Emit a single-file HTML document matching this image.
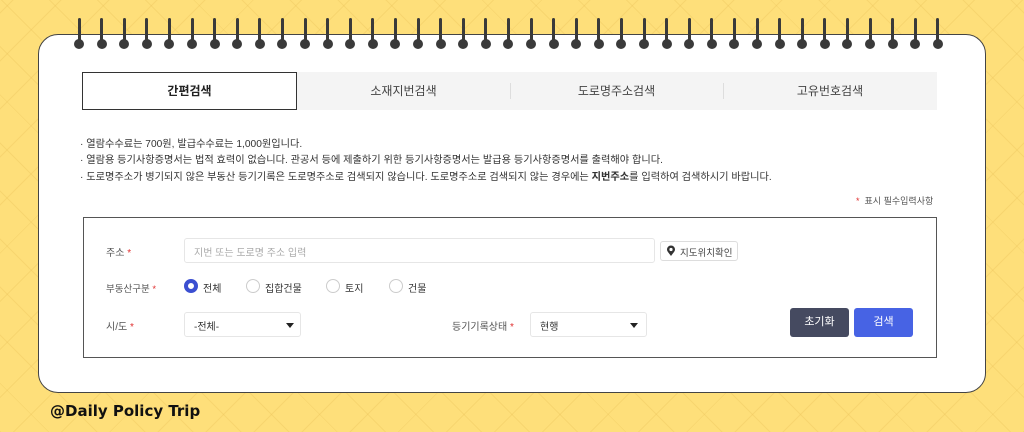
<!DOCTYPE html>
<html><head><meta charset="utf-8"><style>
*{margin:0;padding:0;box-sizing:border-box}
body{width:1024px;height:432px;overflow:hidden;position:relative;font-family:"Liberation Sans","Noto Sans CJK KR",sans-serif;
background-color:#fedf7a;
background-image:repeating-linear-gradient(45deg,rgba(235,195,90,.35) 0 1px,transparent 1px 34px),repeating-linear-gradient(-45deg,rgba(235,195,90,.35) 0 1px,transparent 1px 34px);}
.card{position:absolute;left:38px;top:34px;width:948px;height:359px;background:#fff;border:1.5px solid #444;border-radius:20px;}
.ring{position:absolute;top:18px;width:10px;height:32px}
.ring:before{content:"";position:absolute;left:3.5px;top:0;width:3px;height:26px;background:#3a3a3a;border-radius:2px}
.ring:after{content:"";position:absolute;left:0;top:21px;width:10px;height:10px;border-radius:50%;background:#3a3a3a}
.a{position:absolute;font-size:11px;color:#333;white-space:nowrap}
.tabs{position:absolute;left:82px;top:72px;width:855px;height:38px;background:#f4f4f4}
.tab{position:absolute;top:0;height:38px;line-height:38px;text-align:center;font-size:12px;color:#444}
.sep{position:absolute;top:11px;width:1px;height:16px;background:#ddd}
.box{position:absolute;left:83px;top:217px;width:854px;height:141px;border:1.5px solid #555}
.inp{position:absolute;border:1px solid #e6e6e6;border-radius:3px;background:#fff}
.red{color:#e03030}
.rad{position:absolute;width:14px;height:14px;border:1px solid #ccc;border-radius:50%;background:#fff}
.tri{position:absolute;width:0;height:0;border-left:4px solid transparent;border-right:4px solid transparent;border-top:5px solid #222}
.btn{position:absolute;top:308px;height:29px;border-radius:3px;color:#fff;font-size:11px;text-align:center;line-height:29px}
</style></head><body>
<div class="card"></div>
<div id="rings"></div>
<div class="tabs">
<div class="tab" style="left:0;width:215px;background:#fff;border:1.5px solid #333;font-weight:bold;color:#222;line-height:37px">간편검색</div>
<div class="tab" style="left:215px;width:213px">소재지번검색</div>
<div class="sep" style="left:428px"></div>
<div class="tab" style="left:428px;width:213px">도로명주소검색</div>
<div class="sep" style="left:641px"></div>
<div class="tab" style="left:641px;width:214px">고유번호검색</div>
</div>
<div class="a" style="left:80px;top:135px;font-size:10.2px">· 열람수수료는 700원, 발급수수료는 1,000원입니다.</div>
<div class="a" style="left:80px;top:151px;font-size:10.2px">· 열람용 등기사항증명서는 법적 효력이 없습니다. 관공서 등에 제출하기 위한 등기사항증명서는 발급용 등기사항증명서를 출력해야 합니다.</div>
<div class="a" style="left:80px;top:168px;font-size:10.2px">· 도로명주소가 병기되지 않은 부동산 등기기록은 도로명주소로 검색되지 않습니다. 도로명주소로 검색되지 않는 경우에는 <b>지번주소</b>를 입력하여 검색하시기 바랍니다.</div>
<div class="a" style="left:856px;top:194px;font-size:9px;color:#555"><span class="red">*</span>&nbsp; 표시 필수입력사항</div>
<div class="box"></div>
<div class="a" style="left:106px;top:244px;font-size:10px;color:#555">주소 <span class="red">*</span></div>
<div class="inp" style="left:184px;top:238px;width:471px;height:25px"></div>
<div class="a" style="left:194px;top:244px;font-size:10px;color:#aaa">지번 또는 도로명 주소 입력</div>
<div class="inp" style="left:660px;top:241px;width:78px;height:20px;border-color:#ddd"></div>
<svg style="position:absolute;left:666px;top:245px" width="10" height="12" viewBox="0 0 10 12"><path d="M5 11 C2 7 1 6 1 4.5 A4 4 0 0 1 9 4.5 C9 6 8 7 5 11Z" fill="#333"/><circle cx="5" cy="4.5" r="1.6" fill="#fff"/></svg>
<div class="a" style="left:680px;top:245px;font-size:9.5px;color:#444">지도위치확인</div>
<div class="a" style="left:106px;top:281px;font-size:9.5px;color:#555">부동산구분 <span class="red">*</span></div>
<div class="rad" style="left:184px;top:279px;border:4px solid #3b4fd1"></div>
<div class="a" style="left:203px;top:280px;font-size:10px">전체</div>
<div class="rad" style="left:246px;top:279px"></div><div class="a" style="left:265px;top:280px;font-size:10px">집합건물</div>
<div class="rad" style="left:326px;top:279px"></div><div class="a" style="left:345px;top:280px;font-size:10px">토지</div>
<div class="rad" style="left:389px;top:279px"></div><div class="a" style="left:408px;top:280px;font-size:10px">건물</div>
<div class="a" style="left:106px;top:318px;font-size:10px;color:#555">시/도 <span class="red">*</span></div>
<div class="inp" style="left:184px;top:312px;width:117px;height:25px"></div>
<div class="a" style="left:194px;top:318px;font-size:10px">-전체-</div>
<div class="tri" style="left:286px;top:323px"></div>
<div class="a" style="left:452px;top:318px;font-size:10px;color:#555">등기기록상태 <span class="red">*</span></div>
<div class="inp" style="left:530px;top:312px;width:117px;height:25px"></div>
<div class="a" style="left:540px;top:318px;font-size:10px">현행</div>
<div class="tri" style="left:630px;top:323px"></div>
<div class="btn" style="left:790px;width:59px;background:#454a60">초기화</div>
<div class="btn" style="left:854px;width:59px;background:#4763e4">검색</div>
<div class="a" style="left:50px;top:402px;font-size:15px;color:#111;font-family:'DejaVu Sans',sans-serif;font-weight:bold">@Daily Policy Trip</div>
<script>
var s='';for(var i=0;i<39;i++){s+='<div class="ring" style="left:'+(74+i*22.6)+'px"></div>';}
document.getElementById('rings').innerHTML=s;
</script>
</body></html>
